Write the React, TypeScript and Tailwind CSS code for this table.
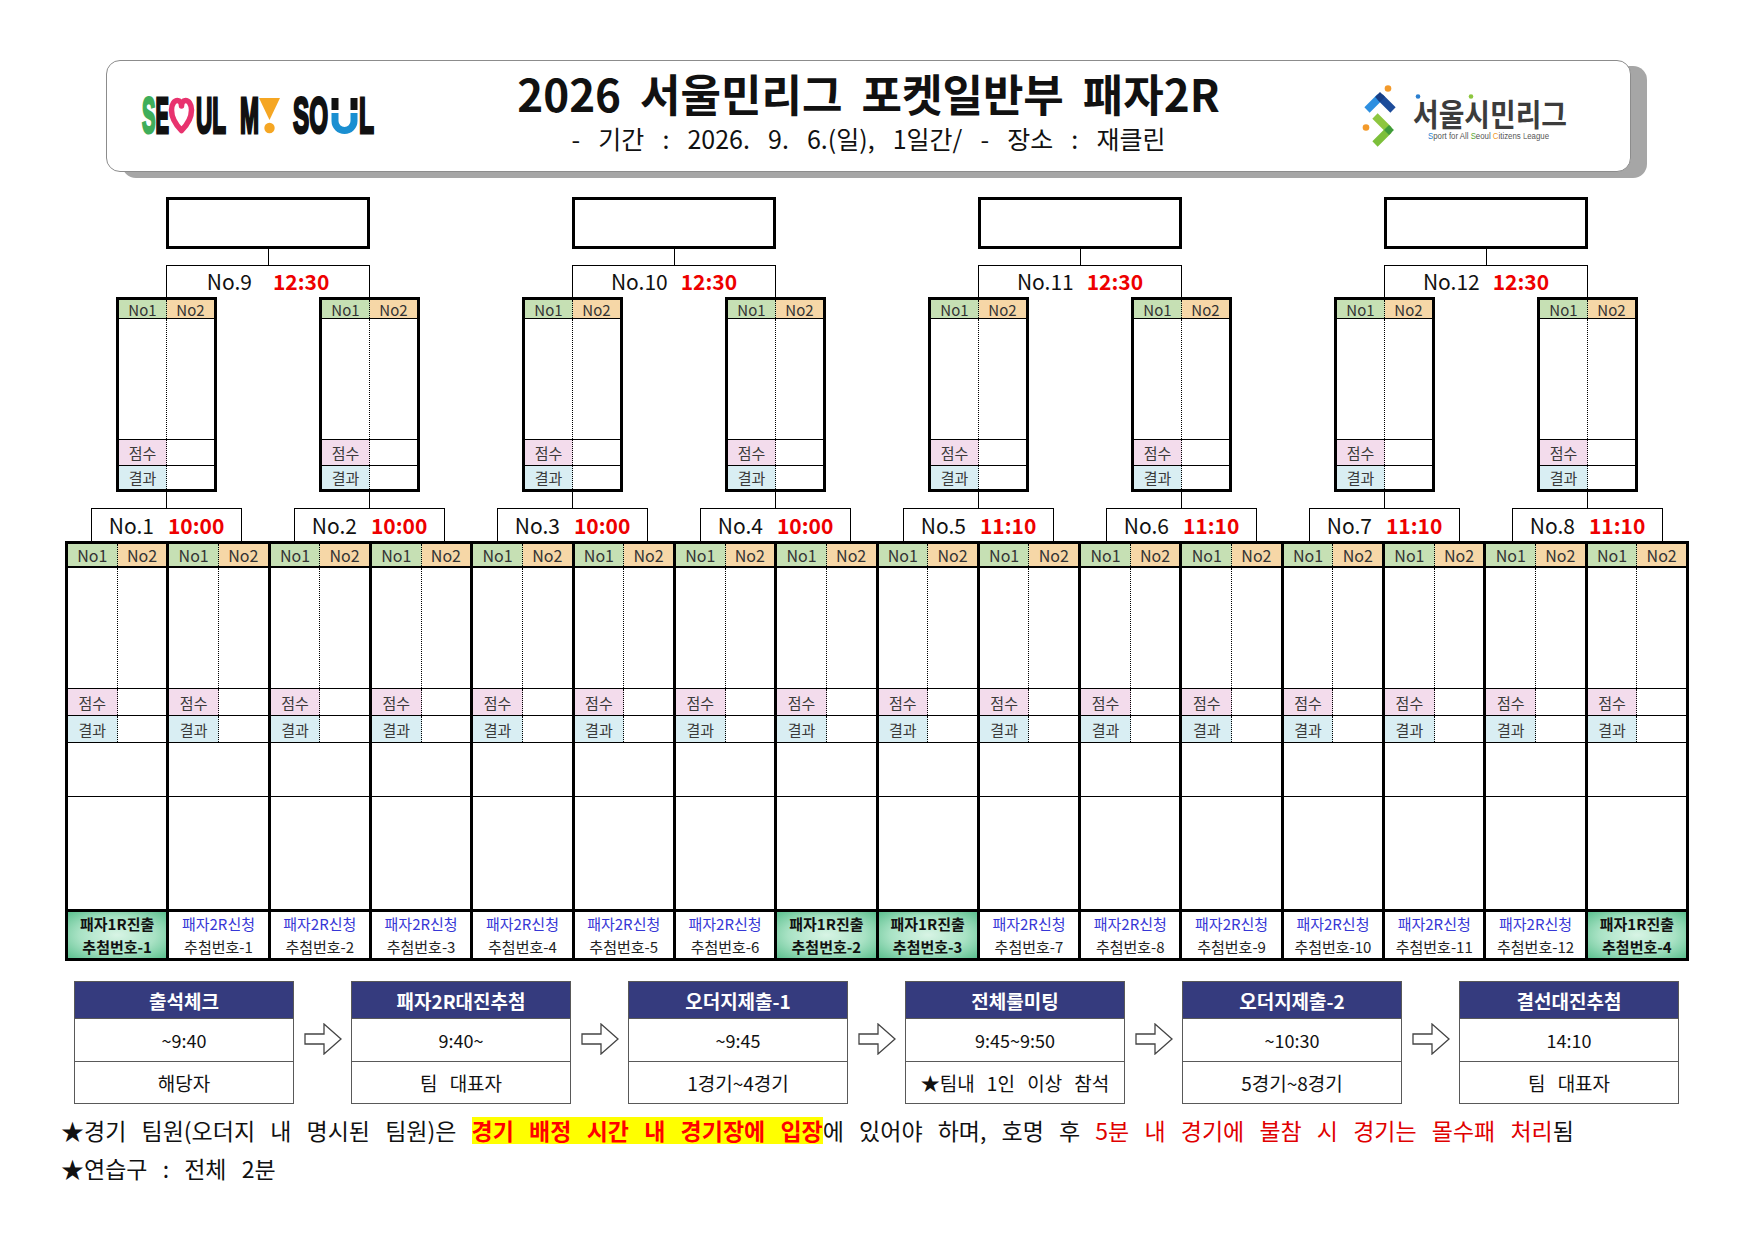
import React from 'react';

type Match = { no: string; time: string; gap: string };

const GROUPS: { top: Match; left: Match; right: Match }[] = [
  {
    top: { no: 'No.9', time: '12:30', gap: 'gap-[21px]' },
    left: { no: 'No.1', time: '10:00', gap: 'gap-[14px]' },
    right: { no: 'No.2', time: '10:00', gap: 'gap-[14px]' },
  },
  {
    top: { no: 'No.10', time: '12:30', gap: 'gap-[13px]' },
    left: { no: 'No.3', time: '10:00', gap: 'gap-[14px]' },
    right: { no: 'No.4', time: '10:00', gap: 'gap-[14px]' },
  },
  {
    top: { no: 'No.11', time: '12:30', gap: 'gap-[13px]' },
    left: { no: 'No.5', time: '11:10', gap: 'gap-[14px]' },
    right: { no: 'No.6', time: '11:10', gap: 'gap-[14px]' },
  },
  {
    top: { no: 'No.12', time: '12:30', gap: 'gap-[13px]' },
    left: { no: 'No.7', time: '11:10', gap: 'gap-[14px]' },
    right: { no: 'No.8', time: '11:10', gap: 'gap-[14px]' },
  },
];

// bottom row of the grid: seeded teams from round 1 + round 2 applicants
const FOOT: { top: string; bottom: string; seed?: boolean }[] = [
  { top: '패자1R진출', bottom: '추첨번호-1', seed: true },
  { top: '패자2R신청', bottom: '추첨번호-1' },
  { top: '패자2R신청', bottom: '추첨번호-2' },
  { top: '패자2R신청', bottom: '추첨번호-3' },
  { top: '패자2R신청', bottom: '추첨번호-4' },
  { top: '패자2R신청', bottom: '추첨번호-5' },
  { top: '패자2R신청', bottom: '추첨번호-6' },
  { top: '패자1R진출', bottom: '추첨번호-2', seed: true },
  { top: '패자1R진출', bottom: '추첨번호-3', seed: true },
  { top: '패자2R신청', bottom: '추첨번호-7' },
  { top: '패자2R신청', bottom: '추첨번호-8' },
  { top: '패자2R신청', bottom: '추첨번호-9' },
  { top: '패자2R신청', bottom: '추첨번호-10' },
  { top: '패자2R신청', bottom: '추첨번호-11' },
  { top: '패자2R신청', bottom: '추첨번호-12' },
  { top: '패자1R진출', bottom: '추첨번호-4', seed: true },
];

const FLOW = [
  { title: '출석체크', time: '~9:40', who: '해당자' },
  { title: '패자2R대진추첨', time: '9:40~', who: '팀 대표자' },
  { title: '오더지제출-1', time: '~9:45', who: '1경기~4경기' },
  { title: '전체룰미팅', time: '9:45~9:50', who: '★팀내 1인 이상 참석' },
  { title: '오더지제출-2', time: '~10:30', who: '5경기~8경기' },
  { title: '결선대진추첨', time: '14:10', who: '팀 대표자' },
];

const SeoulMySoul: React.FC = () => (
  <svg width="234" height="42" viewBox="0 0 234 42">
    <g fontFamily="'Liberation Sans', Arial, sans-serif" fontWeight="bold" fontSize="50" strokeWidth="3" fill="#111" stroke="#111">
      <text x="1" y="38" textLength="27" lengthAdjust="spacingAndGlyphs">
        <tspan fill="#3fae5a" stroke="#3fae5a">S</tspan>E
      </text>
      <text x="55" y="38" textLength="30" lengthAdjust="spacingAndGlyphs">UL</text>
      <text x="99" y="38" textLength="19" lengthAdjust="spacingAndGlyphs">M</text>
      <text x="152" y="38" textLength="35" lengthAdjust="spacingAndGlyphs">SO</text>
      <text x="218" y="38" textLength="15" lengthAdjust="spacingAndGlyphs">L</text>
    </g>
    <path
      d="M40.5 35.5 C36 31 30.5 24 30.5 15 C30.5 9 33.5 5.5 36.5 5.5 C39 5.5 40.5 8 40.5 11 C40.5 8 42 5.5 44.5 5.5 C47.5 5.5 50.5 9 50.5 15 C50.5 24 45 31 40.5 35.5 Z"
      fill="none"
      stroke="#e8336e"
      strokeWidth="5.5"
      strokeLinejoin="round"
    />
    <polygon points="118,3 139,3 128.5,25" fill="#f5a623" />
    <circle cx="128.5" cy="33" r="5.2" fill="#f5a623" />
    <rect x="190.5" y="3" width="7" height="12" fill="#111" />
    <rect x="209.5" y="3" width="7" height="12" fill="#111" />
    <path d="M194 18 V26 A9.5 9.5 0 0 0 213 26 V18" fill="none" stroke="#1a8fd1" strokeWidth="7" />
  </svg>
);

const CitizensLeague: React.FC = () => (
  <svg width="210" height="62" viewBox="0 0 210 62">
    <circle cx="27" cy="3.5" r="3.3" fill="#f39a2b" />
    <path d="M6 25 L19 12" stroke="#2e8fe0" strokeWidth="7.5" fill="none" />
    <path d="M19 12 L32 25" stroke="#1d4c9a" strokeWidth="7.5" fill="none" />
    <rect x="15.5" y="8.5" width="7" height="7" transform="rotate(45 19 12)" fill="#173f86" />
    <circle cx="5" cy="42.5" r="3.3" fill="#f39a2b" />
    <path d="M14 31 L28 45" stroke="#8dc63f" strokeWidth="7.5" fill="none" />
    <path d="M28 45 L14 59" stroke="#7cbf3a" strokeWidth="7.5" fill="none" />
    <rect x="24.5" y="41.5" width="7" height="7" transform="rotate(45 28 45)" fill="#3f9b3a" />
    <text
      x="52"
      y="41"
      fontSize="31"
      fontWeight="bold"
      fill="#3c3c3c"
      textLength="154"
      lengthAdjust="spacingAndGlyphs"
      fontFamily="'Noto Sans CJK KR', sans-serif"
    >
      서울시민리그
    </text>
    <circle cx="57" cy="11.5" r="2.3" fill="#2a7fd0" />
    <circle cx="110" cy="11.5" r="2.3" fill="#8dc63f" />
    <text
      x="67"
      y="54"
      fontSize="8.5"
      fill="#555"
      textLength="121"
      lengthAdjust="spacingAndGlyphs"
      fontFamily="'Liberation Sans', Arial, sans-serif"
    >
      <tspan fill="#2a7fd0">S</tspan>port for All <tspan fill="#5aa832">S</tspan>eoul{' '}
      <tspan fill="#f39a2b">C</tspan>itizens <tspan fill="#777">L</tspan>eague
    </text>
  </svg>
);

const Arrow: React.FC = () => (
  <svg width="38" height="32" viewBox="0 0 38 32">
    <path d="M1 11 H20 V1 L37 16 L20 31 V21 H1 Z" fill="#fff" stroke="#444" strokeWidth="1.3" strokeLinejoin="miter" />
  </svg>
);

const Label: React.FC<{ m: Match; wide?: boolean }> = ({ m, wide }) => (
  <div
    className={`${wide ? 'w-[204px] h-[32px]' : 'w-[151px] h-[33px]'} border-t border-x border-black bg-white flex items-center justify-center ${m.gap} text-[21px] leading-none`}
  >
    <span className="text-[#111]">{m.no}</span>
    <span className="font-bold text-[#ee0000]">{m.time}</span>
  </div>
);

const SemiBox: React.FC = () => (
  <div className="w-[101px] h-[195px] border-[3px] border-black flex flex-col bg-white">
    <div className="h-[19px] flex border-b border-black text-[15px] leading-none text-[#333]">
      <div className="flex-1 bg-[#c6e0b4] border-r border-dotted border-black flex items-center justify-center">No1</div>
      <div className="flex-1 bg-[#f6d7a7] flex items-center justify-center">No2</div>
    </div>
    <div className="flex-1 flex">
      <div className="flex-1 border-r border-dotted border-black" />
      <div className="flex-1" />
    </div>
    <div className="h-[26px] flex border-t border-black text-[15px] leading-none text-[#3a3a3a]">
      <div className="flex-1 bg-[#f3dcec] border-r border-dotted border-black flex items-center justify-center">점수</div>
      <div className="flex-1" />
    </div>
    <div className="h-[24px] flex border-t border-black text-[15px] leading-none text-[#3a3a3a]">
      <div className="flex-1 bg-[#d9eef3] border-r border-dotted border-black flex items-center justify-center">결과</div>
      <div className="flex-1" />
    </div>
  </div>
);

const Group: React.FC<{ g: (typeof GROUPS)[number] }> = ({ g }) => (
  <div className="w-[406px] flex flex-col">
    <div className="ml-[101px] w-[204px] h-[52px] border-[3px] border-black" />
    <div className="ml-[203px] w-px h-[16px] bg-black" />
    <div className="ml-[101px]">
      <Label m={g.top} wide />
    </div>
    <div className="flex ml-[51px] gap-[102px]">
      <SemiBox />
      <SemiBox />
    </div>
    <div className="flex ml-[101px] gap-[202px]">
      <div className="w-px h-[16px] bg-black" />
      <div className="w-px h-[16px] bg-black" />
    </div>
    <div className="flex ml-[26px] gap-[52px]">
      <Label m={g.left} />
      <Label m={g.right} />
    </div>
  </div>
);

const Column: React.FC<{ i: number }> = ({ i }) => {
  const f = FOOT[i];
  return (
    <div className={`flex-1 flex flex-col ${i === 0 ? '' : 'border-l-[3px] border-black'}`}>
      <div className="h-[24px] flex border-b-2 border-black text-[16px] leading-none text-[#333]">
        <div className="flex-1 bg-[#c6e0b4] border-r border-dotted border-black flex items-center justify-center">No1</div>
        <div className="flex-1 bg-[#f6d7a7] flex items-center justify-center">No2</div>
      </div>
      <div className="h-[120px] flex">
        <div className="flex-1 border-r border-dotted border-black" />
        <div className="flex-1" />
      </div>
      <div className="h-[27px] flex border-t border-black text-[15px] leading-none text-[#3a3a3a]">
        <div className="flex-1 bg-[#f3dcec] border-r border-dotted border-black flex items-center justify-center">점수</div>
        <div className="flex-1" />
      </div>
      <div className="h-[27px] flex border-t border-black text-[15px] leading-none text-[#3a3a3a]">
        <div className="flex-1 bg-[#d9eef3] border-r border-dotted border-black flex items-center justify-center">결과</div>
        <div className="flex-1" />
      </div>
      <div className="h-[54px] border-t border-black" />
      <div className="h-[113px] border-t border-black" />
      <div
        className={`h-[49px] border-t-[3px] border-black flex flex-col items-center justify-center text-[15px] leading-[23px] ${
          f.seed
            ? 'bg-[radial-gradient(ellipse_at_center,#d8f4e5_0%,#a8e2c4_55%,#5cc08f_100%)] font-bold text-[#111]'
            : 'bg-white text-[#222]'
        }`}
      >
        <span className={f.seed ? '' : 'text-[#3636d6]'}>{f.top}</span>
        <span>{f.bottom}</span>
      </div>
    </div>
  );
};

export default function App() {
  return (
    <div className="w-[1754px] h-[1240px] bg-white overflow-hidden pt-[60px] text-[#111] font-['Noto_Sans_CJK_KR',sans-serif]">
      {/* title card */}
      <div className="ml-[106px] w-[1525px] h-[112px] border border-[#8c8c8c] rounded-[14px] bg-white shadow-[16px_6px_0_0_#a6a6a6] grid grid-cols-[1fr_auto_1fr] items-center px-[34px]">
        <div className="justify-self-start">
          <SeoulMySoul />
        </div>
        <div className="self-start pt-[7px] flex flex-col items-center">
          <div className="text-[44px] font-bold leading-[50px] [word-spacing:9px] whitespace-nowrap">
            2026 서울민리그 포켓일반부 패자2R
          </div>
          <div className="mt-[5px] text-[25px] leading-[30px] [word-spacing:12.5px] whitespace-nowrap">
            - 기간 : 2026. 9. 6.(일), 1일간/ - 장소 : 재클린
          </div>
        </div>
        <div className="justify-self-end mr-[25px]">
          <CitizensLeague />
        </div>
      </div>

      {/* bracket */}
      <div className="mt-[25px] ml-[65px] flex">
        {GROUPS.map((g) => (
          <Group key={g.top.no} g={g} />
        ))}
      </div>

      {/* first round grid */}
      <div className="ml-[65px] w-[1624px] border-[3px] border-black flex">
        {FOOT.map((_, i) => (
          <Column key={i} i={i} />
        ))}
      </div>

      {/* schedule flow */}
      <div className="mt-[20px] ml-[74px] flex items-start">
        {FLOW.map((s, i) => (
          <React.Fragment key={s.title}>
            {i > 0 && (
              <div className="w-[57px] flex justify-center pt-[42px]">
                <Arrow />
              </div>
            )}
            <div className="w-[220px] border border-[#595959] flex flex-col">
              <div className="h-[36px] bg-[#353b7e] text-white font-bold text-[19px] leading-none flex items-center justify-center">
                {s.title}
              </div>
              <div className="h-[43px] border-t border-[#595959] text-[18px] leading-none flex items-center justify-center">
                {s.time}
              </div>
              <div className="h-[42px] border-t border-[#595959] text-[19px] leading-none [word-spacing:8px] flex items-center justify-center">
                {s.who}
              </div>
            </div>
          </React.Fragment>
        ))}
      </div>

      {/* notes */}
      <div className="mt-[7px] ml-[61px] text-[23px] leading-[38px] [word-spacing:10px] whitespace-nowrap">
        <div>
          <span>★경기 팀원(오더지 내 명시된 팀원)은 </span>
          <span className="inline-block leading-[27px] bg-[#ffff00] text-[#ff0000] font-bold">경기 배정 시간 내 경기장에 입장</span>
          <span>에 있어야 하며, 호명 후 </span>
          <span className="text-[#e00000]">5분 내 경기에 불참 시 경기는 몰수패 처리</span>
          <span>됨</span>
        </div>
        <div>★연습구 : 전체 2분</div>
      </div>
    </div>
  );
}
